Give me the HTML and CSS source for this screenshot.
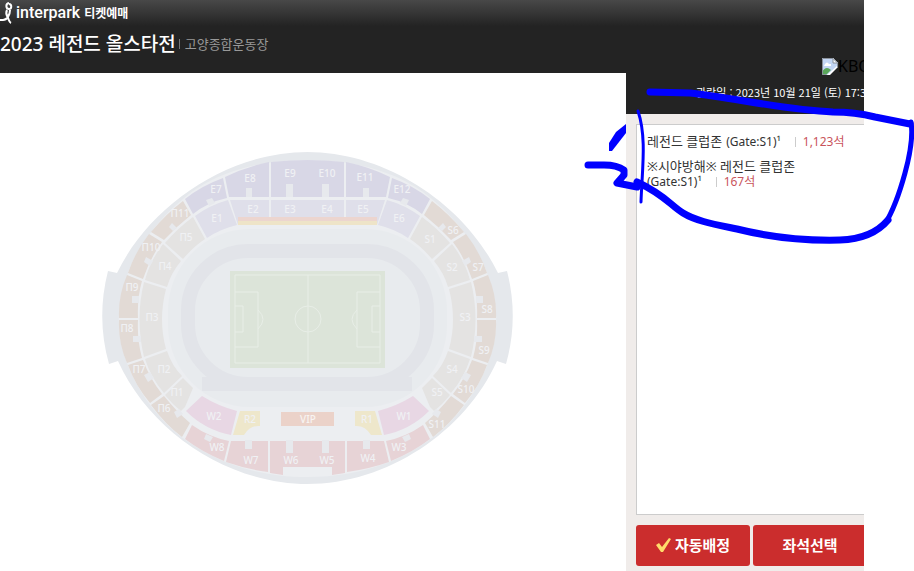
FILE: index.html
```html
<!DOCTYPE html>
<html lang="ko">
<head>
    <meta charset="UTF-8">
    <meta name="viewport" content="width=device-width, initial-scale=1.0">
    <title>인터파크 티켓예매</title>
    <link rel="stylesheet" href="styles.css">
</head>
<body>
    <div class="booking">
        <main class="main">
            <header class="header">
                <div class="brand">
                    <svg class="brand-mark" width="14" height="22" viewBox="0 0 14 22">
                        <path d="M0 18h3c4 0 7-5 7-10M9 1c-4 1-3 6 0 6s3-5 0-5M7 8c-2 4 0 6 1 8s1 4 3 5" />
                    </svg>
                    <span class="brand-name">interpark</span>
                    <span class="brand-sub">티켓예매</span>
                </div>
                <div class="title">
                    <h1>2023 레전드 올스타전</h1>
                    <span class="bar"></span>
                    <span class="place">고양종합운동장</span>
                </div>
            </header>

            <div class="map">
                <svg class="stadium" width="414" height="336" viewBox="101 150 414 336">
                    <defs>
                        <g id="half">
                            <path class="shell" d="M308 152C228 152 150 205 117 273L108 271Q96 318 109 364L118 361C150 432 228 484 308 484Z" />
                            <path class="walk" d="M308 160C245 160 205 180 183 199C165 214 140 240 128 273Q110 319 127 363C140 398 165 425 183 438C210 458 250 477 308 477Z" />
                            <path class="purple" d="M308 160V197H271V162Q290 160 308 160ZM269 162V197H238Q233 197 229 197L225 177Q245 167 269 162ZM223 178L227 198Q208 202 193 214L185 199Q201 186 223 178Z" />
                            <path class="brown" d="M183 201L191 215Q177 226 164 240L151 232Q166 214 183 201ZM149 234L162 242Q150 258 143 279L128 273Q135 252 149 234ZM127 275L142 281Q137 298 138 318H119Q118 296 127 275ZM119 320H138Q137 340 142 358L127 363Q118 342 119 320ZM128 365L143 360Q150 379 162 394L150 403Q135 385 128 365ZM151 405L164 396Q176 411 190 423L182 437Q165 424 151 405Z" />
                            <path class="lilac" d="M308 200V225H271V200ZM269 200V225H238L230 200ZM228 200L237 225Q220 229 207 238L195 216Q210 205 228 200Z" />
                            <path class="beige" d="M193 217L205 239Q193 247 183 259L165 243Q178 228 193 217ZM163 244L181 261Q171 273 167 287L145 280Q150 261 163 244ZM144 282L166 289Q158 320 166 349L144 357Q135 319 144 282ZM145 359L167 351Q172 366 182 376L164 393Q151 378 145 359ZM165 395L183 378L193 388L185 407L181 411Q172 404 165 395Z" />
                            <path class="red" d="M192 425Q209 437 229 441L224 461Q202 452 185 439ZM231 441H268V472Q246 469 226 462ZM270 441H308V467H283V475L270 473Z" />
                            <path class="pink" d="M202 396Q218 406 237 411L231 435Q205 430 186 411Z" />
                            <path class="yellow" d="M240 411H260V426Q250 425 244 435H233Z" />
                            <path class="orange" d="M308 217H238V221H308Z" />
                            <path class="gold" d="M308 221H238V225H308Z" />
                            <path class="stair" d="M246 188h6v9h-6zM286 184h7v13h-7zM206 200l6-2 3 5-6 3zM172 223l5 5-4 3-4-4zM146 257l7 4-3 5-6-4zM132 296h7v7h-7zM133 336h8v6h-8zM144 375l6-3 4 6-6 4zM174 412l5-3 4 5-6 4zM206 434l7 3-3 5-6-3zM245 440h7v9h-7zM286 440h7v13h-7z" />
                        </g>
                    </defs>
                    <use href="#half" />
                    <use href="#half" transform="translate(615 0) scale(-1 1)" />

                    <rect class="field" x="168" y="229" width="279" height="178" rx="82" />
                    <rect class="track" x="188" y="251" width="239" height="133" rx="60" />
                    <path class="track" d="M202 384H412" />
                    <rect class="vip" x="281" y="412" width="53" height="14" />
                    <rect class="grass" x="230" y="271" width="155" height="97" />
                    <path class="lines" d="M235 275H380V363H235ZM308 275V363M235 292H258V347H235M235 306H243V332H235M258 310Q268 319 258 329M380 292H357V347H380M380 306H372V332H380M357 310Q347 319 357 329M295 319a13 13 0 1 0 26 0a13 13 0 1 0-26 0" />

                    <g class="labels">
                        <text x="216" y="193">E7</text><text x="250" y="182">E8</text><text x="290" y="177">E9</text>
                        <text x="327" y="177">E10</text><text x="365" y="181">E11</text><text x="402" y="193">E12</text>
                        <text x="217" y="222">E1</text><text x="253" y="213">E2</text><text x="290" y="213">E3</text>
                        <text x="327" y="213">E4</text><text x="363" y="213">E5</text><text x="399" y="222">E6</text>
                        <text x="180" y="217">П11</text><text x="151" y="251">П10</text><text x="132" y="291">П9</text>
                        <text x="127" y="332">П8</text><text x="139" y="373">П7</text><text x="164" y="412">П6</text>
                        <text x="186" y="241">П5</text><text x="165" y="270">П4</text><text x="152" y="321">П3</text>
                        <text x="164" y="373">П2</text><text x="177" y="396">П1</text>
                        <text x="453" y="234">S6</text><text x="478" y="271">S7</text><text x="487" y="313">S8</text>
                        <text x="484" y="354">S9</text><text x="466" y="393">S10</text><text x="437" y="428">S11</text>
                        <text x="430" y="243">S1</text><text x="452" y="271">S2</text><text x="465" y="321">S3</text>
                        <text x="452" y="373">S4</text><text x="437" y="396">S5</text>
                        <text x="214" y="420">W2</text><text x="404" y="420">W1</text>
                        <text x="250" y="423">R2</text><text x="367" y="423">R1</text><text class="vip-label" x="308" y="423">VIP</text>
                        <text x="217" y="451">W8</text><text x="251" y="464">W7</text><text x="291" y="464">W6</text>
                        <text x="327" y="464">W5</text><text x="368" y="462">W4</text><text x="399" y="451">W3</text>
                    </g>
                </svg>
            </div>
        </main>

        <aside class="side">
            <div class="info">
                <div class="team">
                    <svg width="16" height="17" viewBox="0 0 16 17">
                        <path fill="#c4d7f5" d="M0 0h11l5 5v12H0z" />
                        <path fill="#fff" d="M3 6q2-3 4 0h2v2H2zM11 0l5 5h-5z" />
                        <path fill="#5aa65a" d="M0 17v-3q4-7 9-2l-5 5z" />
                        <path fill="#232323" d="M7 17l9-9v9z" />
                        <path fill="#fff" d="M5 17l11-10v2l-8 8z" />
                        <path fill="none" stroke="#8b929c" d="M4 16.500H.5V.5H11l4.500 4.500v4M11 1v4h4" />
                    </svg>
                    <span>KBO</span>
                </div>
                <p class="date">관람일 : 2023년 10월 21일 (토) 17:30</p>
            </div>
            <div class="panel">
                <ul class="seats">
                    <li>
                        <a class="seat" href="#">
                            <span class="zone">레전드 클럽존</span>
                            <span class="gate">(Gate:S1)¹</span>
                            <span class="count">1,123석</span>
                        </a>
                    </li>
                    <li>
                        <a class="seat" href="#">
                            <span class="zone wide">※시야방해※ 레전드 클럽존</span>
                            <span class="gate">(Gate:S1)¹</span>
                            <span class="count">167석</span>
                        </a>
                    </li>
                </ul>
                <div class="actions">
                    <button type="button">
                        <svg width="15" height="14" viewBox="0 0 15 14"><path fill="#ffdc6b" d="M0 7l3-2 3 4 7-9 2 1-8 13H5z" /></svg>
                        자동배정
                    </button>
                    <button type="button">좌석선택</button>
                </div>
            </div>
        </aside>
    </div>

    <!-- pen marks over the seat list -->
    <svg class="pen" width="334" height="160" viewBox="580 85 334 160">
        <path class="thick" d="M650 92L690 93C735 98 785 110 833 112Q855 112 875 117L910 124" />
        <path class="medium" d="M911 122Q914 140 905 173T885 224" />
        <path class="thick" d="M888 220Q872 239 840 240C800 241 765 236 737 229C713 224 696 221 683 213C670 205 665 195 637 182" />
        <path class="thin" d="M638 111C647 138 642 170 641 202" />
        <path class="fill" d="M626 124V133L612 151H609V143L616 132Z" />
        <path class="thick" d="M588 165H604Q617 165 624 170V175L617 183L637 187" />
    </svg>
</body>
</html>
```
FILE: styles.css
```css
* {
    box-sizing: border-box;
}
body {
    margin: 0;
    background: #fff;
    font-family: "Noto Sans", "Noto Sans CJK KR", sans-serif;
    position: relative;
    overflow-x: hidden;
}
.booking {
    display: grid;
    grid-template-columns: 1fr 238px;
    min-height: 100vh;
    margin-right: 50px;
}
.main, .side {
    display: flex;
    flex-direction: column;
    min-width: 0;
}
.header, .info {
    background: #232323 linear-gradient(#484848, #232323) no-repeat 0 0 / 100% 26px;
}
.header {
    height: 73px;
    color: #fff;
}
.brand {
    display: flex;
    align-items: center;
    height: 26px;
    gap: 2px;
}
.brand-mark path {
    fill: none;
    stroke: #fff;
    stroke-width: 2;
}
.brand-name {
    font-family: Roboto, sans-serif;
    font-size: 16px;
    font-weight: 500;
    line-height: 20px;
}
.brand-sub {
    font-size: 12px;
    font-weight: 700;
    margin-left: 2px;
}
.title {
    display: flex;
    align-items: center;
    height: 34px;
}
.title h1 {
    margin: 0;
    font-size: 19px;
    font-weight: 500;
}
.bar {
    width: 1px;
    height: 10px;
    margin: 2px 5px 0 3px;
    background: #777;
}
.place {
    font-size: 13px;
    color: #999;
}
.map {
    flex: 1;
    display: flex;
    justify-content: center;
    padding-top: 77px;
    padding-right: 10px;
}
.shell {
    fill: #e5e8ec;
}
.walk {
    fill: #eceef1;
}
.purple {
    fill: #d8d7e6;
}
.lilac {
    fill: #dfdfea;
}
.brown {
    fill: #e2dad5;
}
.beige {
    fill: #e4e3e2;
}
.red {
    fill: #e7d3d6;
}
.pink {
    fill: #e8d7e4;
}
.yellow {
    fill: #eee7cb;
}
.orange {
    fill: #ecd5cf;
}
.gold {
    fill: #eee4c8;
}
.stair {
    fill: #e7e9ed;
}
.field {
    fill: #e8ebee;
}
.track {
    fill: none;
    stroke: #e2e4e9;
    stroke-width: 14;
}
.vip {
    fill: #ebd2c9;
}
.grass {
    fill: #dce4d9;
}
.lines {
    fill: none;
    stroke: #e8eee7;
}
.labels {
    fill: #f0f1f4;
    font-size: 10px;
    font-weight: 500;
    text-anchor: middle;
}
.vip-label {
    fill: #f8f4f2;
}
.side {
    overflow: hidden;
    background: #f0ecea;
}
.info {
    height: 114px;
    padding-top: 54px;
    white-space: nowrap;
}
.team {
    display: flex;
    align-items: center;
    height: 24px;
    margin-left: 196px;
    font-size: 16px;
    color: #000;
}
.team svg {
    flex: none;
}
.date {
    margin: 4px 0 0 70px;
    font-family: "Noto Sans CJK KR", sans-serif;
    font-size: 11px;
    line-height: 20px;
    color: #fff;
}
.panel {
    flex: 1;
    display: flex;
    flex-direction: column;
    padding: 10px 0 5px 10px;
}
.seats {
    flex: 1;
    margin: 0;
    padding: 9px 10px;
    list-style: none;
    background: #fff;
    border: 1px solid #ccc;
    border-right: 0;
    font-size: 12px;
    line-height: 15px;
}
.seats li {
    margin-bottom: 10px;
}
.seat {
    display: flex;
    flex-wrap: wrap;
    align-items: center;
    column-gap: 4px;
    color: #333;
    text-decoration: none;
}
.zone {
    font-size: 13px;
}
.wide {
    flex-basis: 100%;
}
.count {
    margin-left: 10px;
    padding-left: 8px;
    background: linear-gradient(#ccc, #ccc) no-repeat 0 50% / 1px 10px;
    color: #c9545b;
}
.actions {
    display: flex;
    gap: 3px;
    margin-top: 10px;
}
.actions button {
    flex: none;
    display: flex;
    align-items: center;
    justify-content: center;
    gap: 4px;
    width: 114px;
    height: 41px;
    padding: 0 0 2px;
    border: 0;
    border-radius: 3px;
    background: #cb2d2d;
    color: #fff;
    font-family: inherit;
    font-size: 15px;
    font-weight: 700;
    line-height: 20px;
}
.pen {
    position: absolute;
    top: 85px;
    right: 0;
    pointer-events: none;
    fill: none;
    stroke: #00f;
    stroke-linejoin: round;
    stroke-linecap: round;
}
.thick {
    stroke-width: 7;
}
.medium {
    stroke-width: 5;
}
.thin {
    stroke-width: 3;
}
.fill {
    fill: #00f;
    stroke: none;
}
```
